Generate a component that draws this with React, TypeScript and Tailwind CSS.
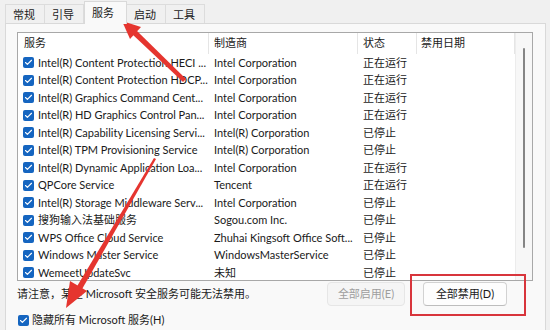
import { Check } from "lucide-react";

type Service = { name: string; maker: string; status: string };

const services: Service[] = [
  { name: "Intel(R) Content Protection HECI ...", maker: "Intel Corporation", status: "正在运行" },
  { name: "Intel(R) Content Protection HDCP...", maker: "Intel Corporation", status: "正在运行" },
  { name: "Intel(R) Graphics Command Cent...", maker: "Intel Corporation", status: "正在运行" },
  { name: "Intel(R) HD Graphics Control Pan...", maker: "Intel Corporation", status: "正在运行" },
  { name: "Intel(R) Capability Licensing Servi...", maker: "Intel(R) Corporation", status: "已停止" },
  { name: "Intel(R) TPM Provisioning Service", maker: "Intel(R) Corporation", status: "已停止" },
  { name: "Intel(R) Dynamic Application Loa...", maker: "Intel Corporation", status: "正在运行" },
  { name: "QPCore Service", maker: "Tencent", status: "正在运行" },
  { name: "Intel(R) Storage Middleware Serv...", maker: "Intel Corporation", status: "已停止" },
  { name: "搜狗输入法基础服务", maker: "Sogou.com Inc.", status: "已停止" },
  { name: "WPS Office Cloud Service", maker: "Zhuhai Kingsoft Office Soft...", status: "已停止" },
  { name: "Windows Master Service", maker: "WindowsMasterService", status: "已停止" },
  { name: "WemeetUpdateSvc", maker: "未知", status: "已停止" },
];

const tabs = ["常规", "引导", "服务", "启动", "工具"];

function CheckBox() {
  return (
    <span className="flex items-center justify-center w-[11px] h-[11px] rounded-[2px] bg-[#1565c0] shrink-0">
      <Check size={9} strokeWidth={3} color="#ffffff" />
    </span>
  );
}

function Arrows() {
  return (
    <svg className="absolute left-0 top-0 pointer-events-none" width="550" height="330" viewBox="0 0 550 330">
      {/* arrow to the 服务 tab */}
      <polygon points="186,79 183,82 132,34 136,30" fill="#e5352f" />
      <polygon points="122,21 141,27 130,39" fill="#e5352f" />
      {/* arrow to the hide checkbox */}
      <polygon points="154,158 156,159 81,291 76,288" fill="#e5352f" />
      <polygon points="66,308 70,281 87,291" fill="#e5352f" />
    </svg>
  );
}

export default function App() {
  return (
    <div className="relative w-[550px] h-[330px] overflow-hidden bg-[#f0f0f0] text-[#1a1a1a] text-[11px] font-['Lato','Noto_Sans_CJK_SC',sans-serif]">
      <div className="flex items-end h-[23px] pl-[5px]">
        {tabs.map((t) =>
          t === "服务" ? (
            <div
              key={t}
              className="relative z-10 -mb-px w-[43px] h-[23px] pl-[7px] pt-[3px] bg-[#f9f9f9] border border-b-0 border-[#d9d9d9]"
            >
              {t}
            </div>
          ) : (
            <div
              key={t}
              className="w-[40px] h-[19px] pl-[7px] pt-[2px] border border-b-0 border-[#dcdcdc] bg-[#f0f0f0] -ml-px first:ml-0"
            >
              {t}
            </div>
          )
        )}
      </div>

      <div className="ml-[5px] w-[541px] h-[307px] bg-[#f9f9f9] border border-b-0 border-[#d9d9d9] pl-[11px] pt-[8px]">
        <div className="flex w-[516px] h-[249px] bg-white border border-[#a8a8a8] overflow-hidden">
          <div className="flex-1 min-w-0">
            <div className="flex h-[21px] items-center">
              <div className="w-[190px] pl-[6px]">服务</div>
              <div className="w-[149px] pl-[5px] h-full flex items-center border-l border-[#e5e5e5]">制造商</div>
              <div className="w-[59px] pl-[5px] h-full flex items-center border-l border-[#e5e5e5]">状态</div>
              <div className="flex-1 pl-[4px] h-full flex items-center border-l border-r border-[#e5e5e5]">禁用日期</div>
            </div>
            {services.map((s) => (
              <div key={s.name} className="flex items-center h-[17.5px] whitespace-nowrap">
                <div className="w-[190px] flex items-center gap-[4px] pl-[5px] overflow-hidden">
                  <CheckBox />
                  <span>{s.name}</span>
                </div>
                <div className="w-[149px] pl-[6px] overflow-hidden">{s.maker}</div>
                <div className="w-[59px] pl-[6px]">{s.status}</div>
              </div>
            ))}
          </div>
          <div className="w-[17px] bg-[#f7f7f7] border-l border-[#ececec] flex justify-center pt-[15px]">
            <div className="w-[2px] h-[200px] rounded-full bg-[#858585]" />
          </div>
        </div>

        <div className="flex items-center h-[26px] w-[516px]">
          <span>请注意，某些 Microsoft 安全服务可能无法禁用。</span>
          <div className="ml-auto mr-[26px] flex gap-[18px]">
            <div className="w-[78px] h-[24px] flex items-center justify-center rounded-[4px] border border-[#e6e6e6] bg-[#f5f5f5] text-[#9e9e9e]">
              全部启用(E)
            </div>
            <div className="w-[84px] h-[24px] flex items-center justify-center rounded-[4px] border border-[#d2d2d2] border-b-[#bdbdbd] bg-[#fdfdfd] text-[#1a1a1a]">
              全部禁用(D)
            </div>
          </div>
        </div>

        <div className="flex items-center gap-[3px] mt-[5px] ml-[1px]">
          <CheckBox />
          <span>隐藏所有 Microsoft 服务(H)</span>
        </div>
      </div>

      <div className="absolute left-[410px] top-[274px] w-[116px] h-[42px] border-2 border-[#d8353c]" />
      <Arrows />
    </div>
  );
}
